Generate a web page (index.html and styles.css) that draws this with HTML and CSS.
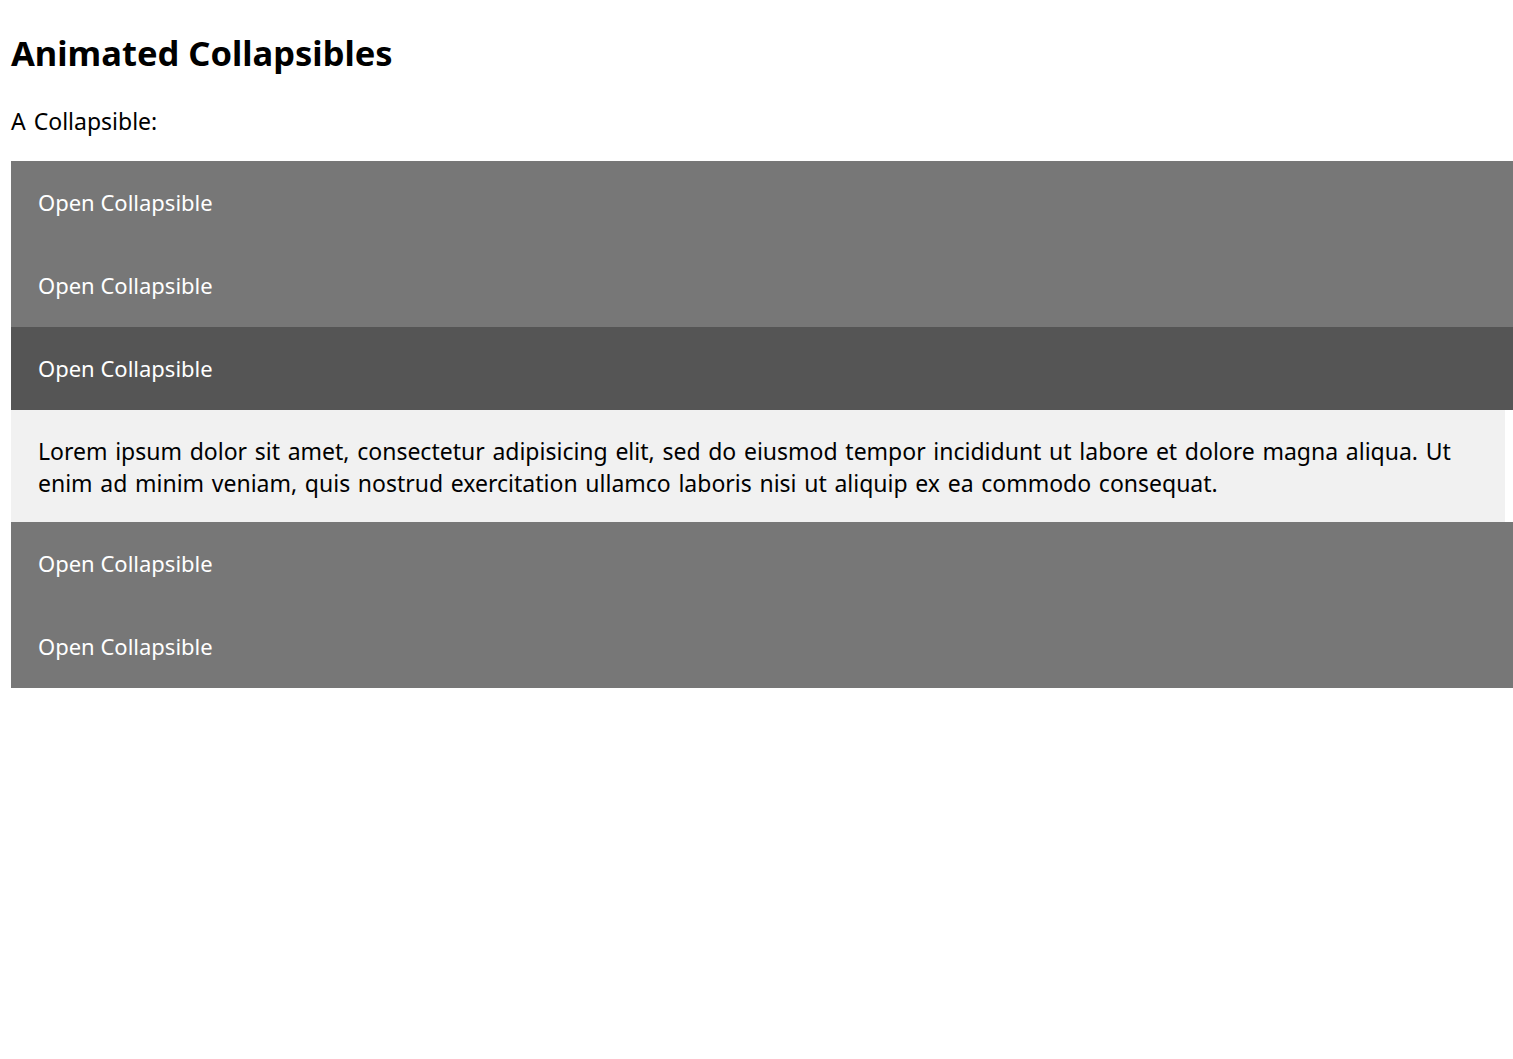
FILE: index.html
```html
<!DOCTYPE html>
<html>
<head>
<meta charset="utf-8">
<title>Animated Collapsibles</title>
<link rel="stylesheet" href="styles.css">
</head>
<body>
<h2 class="title">Animated Collapsibles</h2>
<p class="intro">A Collapsible:</p>
<button class="collapsible">Open Collapsible</button>
<button class="collapsible">Open Collapsible</button>
<button class="collapsible active">Open Collapsible</button>
<div class="content">
  <p>Lorem ipsum dolor sit amet, consectetur adipisicing elit, sed do eiusmod tempor incididunt ut labore et dolore magna aliqua. Ut enim ad minim veniam, quis nostrud exercitation ullamco laboris nisi ut aliquip ex ea commodo consequat.</p>
</div>
<button class="collapsible">Open Collapsible</button>
<button class="collapsible">Open Collapsible</button>
</body>
</html>
```
FILE: styles.css
```css
html, body {
  overflow-x: hidden;
}
body {
  margin: 0;
  padding: 0 8px 0 11px;
  font-family: "Noto Sans", "Noto Sans CJK KR", sans-serif;
  color: #000;
  background: #fff;
}
.title {
  margin: 31px 0 0;
  font-size: 34.5px;
  line-height: 44px;
  font-weight: 700;
  word-spacing: 0;
}
.intro {
  margin: 30px 0 24px;
  font-size: 23px;
  line-height: 32px;
  word-spacing: 2px;
}
.collapsible {
  display: block;
  width: calc(100% + 8px);
  height: 83px;
  margin: 0;
  padding: 0 27px;
  border: none;
  outline: none;
  background: #777;
  color: #fff;
  font-family: inherit;
  font-size: 22px;
  line-height: 83px;
  text-align: left;
  cursor: pointer;
}
.collapsible.active {
  background: #555;
}
.content {
  padding: 0 27px;
  background: #f1f1f1;
  overflow: hidden;
}
.content p {
  margin: 25px 0 23px;
  font-size: 23px;
  line-height: 32px;
  word-spacing: 1.7px;
}
```
